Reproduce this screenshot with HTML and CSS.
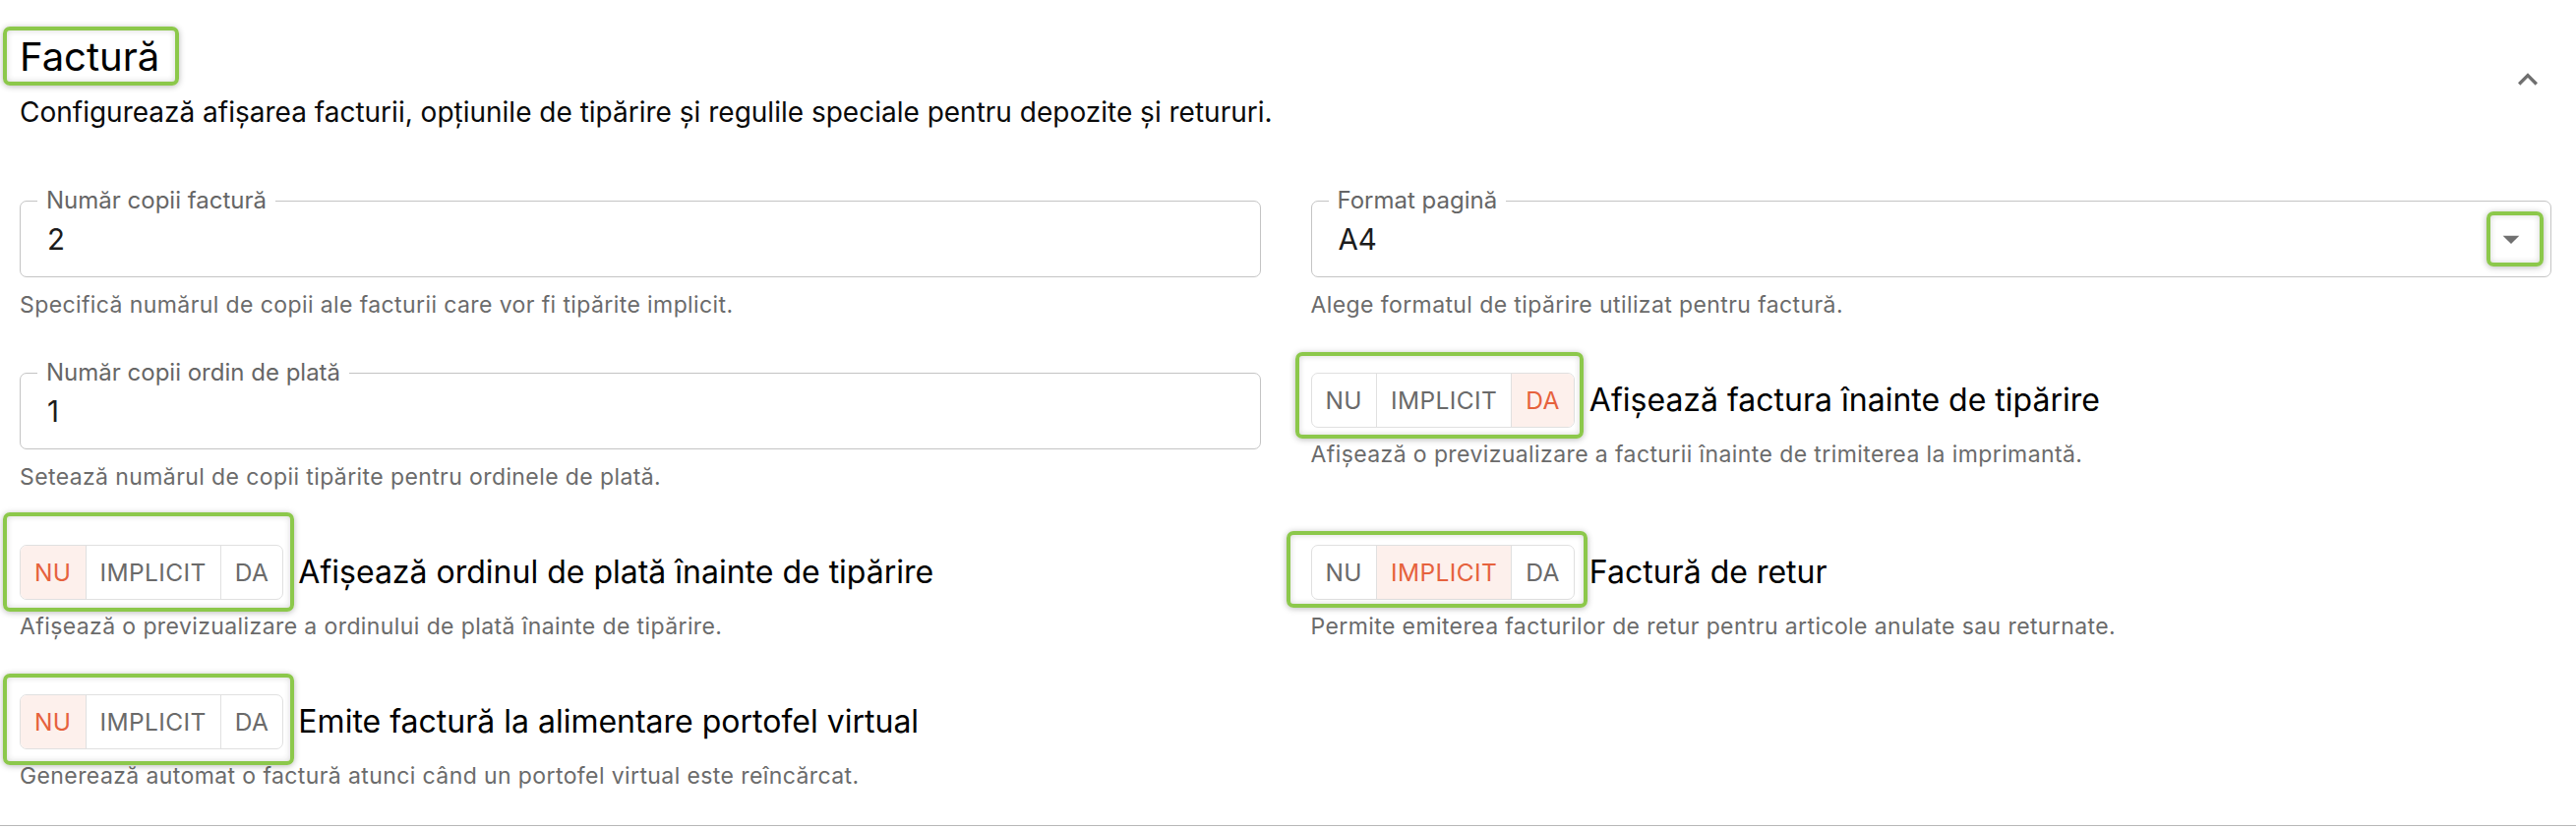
FILE: index.html
```html
<!DOCTYPE html>
<html lang="ro">
<head>
<meta charset="utf-8">
<title>Factură</title>
<link rel="stylesheet" href="styles.css">
</head>
<body>
<section class="accordion">
  <header class="summary">
    <div class="summary-text">
      <h2 class="title"><span class="mark">Factură<span class="hl hl-title"></span></span></h2>
      <p class="desc">Configurează afișarea facturii, opțiunile de tipărire și regulile speciale pentru depozite și retururi.</p>
    </div>
    <svg class="expand" viewBox="0 0 24 24" width="40" height="40" aria-hidden="true"><path d="M12 8l-6 6 1.41 1.41L12 10.83l4.59 4.58L18 14z"/></svg>
  </header>

  <div class="grid">
    <div class="cell">
      <fieldset class="field">
        <legend>Număr copii factură</legend>
        <div class="field-inner"><span class="value">2</span></div>
      </fieldset>
      <p class="helper helper-field">Specifică numărul de copii ale facturii care vor fi tipărite implicit.</p>
    </div>

    <div class="cell">
      <fieldset class="field">
        <legend>Format pagină</legend>
        <div class="field-inner">
          <span class="value">A4</span>
          <span class="mark arrow">
            <svg viewBox="0 0 24 24" width="40" height="40" aria-hidden="true"><path d="M7 10l5 5 5-5z"/></svg>
            <span class="hl hl-arrow"></span>
          </span>
        </div>
      </fieldset>
      <p class="helper helper-field">Alege formatul de tipărire utilizat pentru factură.</p>
    </div>

    <div class="cell">
      <fieldset class="field">
        <legend>Număr copii ordin de plată</legend>
        <div class="field-inner"><span class="value">1</span></div>
      </fieldset>
      <p class="helper helper-field">Setează numărul de copii tipărite pentru ordinele de plată.</p>
    </div>

    <div class="cell">
      <div class="toggle-row">
        <span class="mark">
          <span class="toggle">
            <span class="opt">NU</span><span class="opt">IMPLICIT</span><span class="opt on">DA</span>
          </span>
          <span class="hl hl-r1"></span>
        </span>
        <span class="toggle-label">Afișează factura înainte de tipărire</span>
      </div>
      <p class="helper">Afișează o previzualizare a facturii înainte de trimiterea la imprimantă.</p>
    </div>

    <div class="cell">
      <div class="toggle-row">
        <span class="mark">
          <span class="toggle">
            <span class="opt on">NU</span><span class="opt">IMPLICIT</span><span class="opt">DA</span>
          </span>
          <span class="hl hl-l1"></span>
        </span>
        <span class="toggle-label">Afișează ordinul de plată înainte de tipărire</span>
      </div>
      <p class="helper">Afișează o previzualizare a ordinului de plată înainte de tipărire.</p>
    </div>

    <div class="cell">
      <div class="toggle-row">
        <span class="mark">
          <span class="toggle">
            <span class="opt">NU</span><span class="opt on">IMPLICIT</span><span class="opt">DA</span>
          </span>
          <span class="hl hl-r2"></span>
        </span>
        <span class="toggle-label">Factură de retur</span>
      </div>
      <p class="helper">Permite emiterea facturilor de retur pentru articole anulate sau returnate.</p>
    </div>

    <div class="cell">
      <div class="toggle-row">
        <span class="mark">
          <span class="toggle">
            <span class="opt on">NU</span><span class="opt">IMPLICIT</span><span class="opt">DA</span>
          </span>
          <span class="hl hl-l2"></span>
        </span>
        <span class="toggle-label">Emite factură la alimentare portofel virtual</span>
      </div>
      <p class="helper">Generează automat o factură atunci când un portofel virtual este reîncărcat.</p>
    </div>
  </div>
</section>
</body>
</html>
```

FILE: styles.css
```css
* { box-sizing: border-box; }

html, body {
  margin: 0;
  padding: 0;
  background: #ffffff;
}

body {
  font-family: Inter, "Noto Sans", "Liberation Sans", sans-serif;
  color: #000000;
}

.accordion {
  padding: 34px 25px 32px 20px;
  border-bottom: 1px solid #b8b8b8;
}

/* header */
.summary {
  display: flex;
  align-items: flex-start;
  justify-content: space-between;
}

.title {
  margin: 0;
  font-size: 40px;
  line-height: 48px;
  font-weight: 400;
  color: #000;
}

.desc {
  margin: 12px 0 0;
  font-size: 28px;
  line-height: 40px;
  color: #0a0a0a;
}

.expand {
  margin-top: 27px;
  margin-right: 4px;
  fill: #6f6f6f;
  flex: none;
}

/* highlight annotations */
.mark {
  position: relative;
  display: inline-block;
}

.hl {
  position: absolute;
  border: 4px solid #8cc84b;
  border-radius: 7px;
  box-shadow: 0 1px 6px rgba(0, 0, 0, 0.28), inset 0 0 6px rgba(0, 0, 0, 0.16);
  pointer-events: none;
}

.hl-title { top: -7px; right: -20px; bottom: -5px; left: -17px; }
.hl-arrow { top: -8px; right: -13px; bottom: -8px; left: -5px; }
.hl-l1 { top: -33px; right: -11px; bottom: -12px; left: -17px; }
.hl-l2 { top: -21px; right: -11px; bottom: -16px; left: -17px; }
.hl-r1 { top: -21px; right: -9px; bottom: -11px; left: -16px; }
.hl-r2 { top: -14px; right: -13px; bottom: -8px; left: -25px; }

/* grid */
.grid {
  margin-top: 70px;
  display: grid;
  grid-template-columns: 1fr 1fr;
  column-gap: 51px;
  row-gap: 51px;
  align-items: start;
}

.cell {
  min-width: 0;
}

/* outlined field */
.field {
  margin: -12px 0 0;
  padding: 7px 20px 18px 27px;
  border: 1px solid #c4c4c4;
  border-radius: 7px;
  min-width: 0;
}

.field legend {
  margin-left: -10px;
  padding: 0 9px;
  font-size: 24px;
  line-height: 24px;
  color: #666666;
}

.field-inner {
  display: flex;
  align-items: center;
  height: 40px;
}

.value {
  flex: 1;
  font-size: 29.5px;
  line-height: 40px;
  color: #1c1c1c;
}

.arrow {
  width: 40px;
  height: 40px;
  flex: none;
}

.arrow svg {
  display: block;
  fill: #707070;
}

/* helper text */
.helper {
  margin: 9px 0 0;
  font-size: 23px;
  line-height: 36px;
  letter-spacing: 0.4px;
  color: #6b6b6b;
}

.helper-field {
  margin-top: 10px;
}

/* toggle group */
.toggle-row {
  display: flex;
  align-items: center;
  gap: 15px;
}

.toggle-row .mark {
  flex: none;
}

.toggle {
  display: flex;
  height: 56px;
  border: 1px solid #e0e0e0;
  border-radius: 7px;
  overflow: hidden;
}

.opt {
  display: flex;
  align-items: center;
  padding: 0 14px;
  font-size: 24.5px;
  letter-spacing: 0.4px;
  color: #6a6a6a;
}

.opt + .opt {
  border-left: 1px solid #e0e0e0;
}

.opt.on {
  color: #e6623d;
  background: #fdf0ec;
}

.toggle-label {
  font-size: 32px;
  line-height: 40px;
  color: #000;
}
```
